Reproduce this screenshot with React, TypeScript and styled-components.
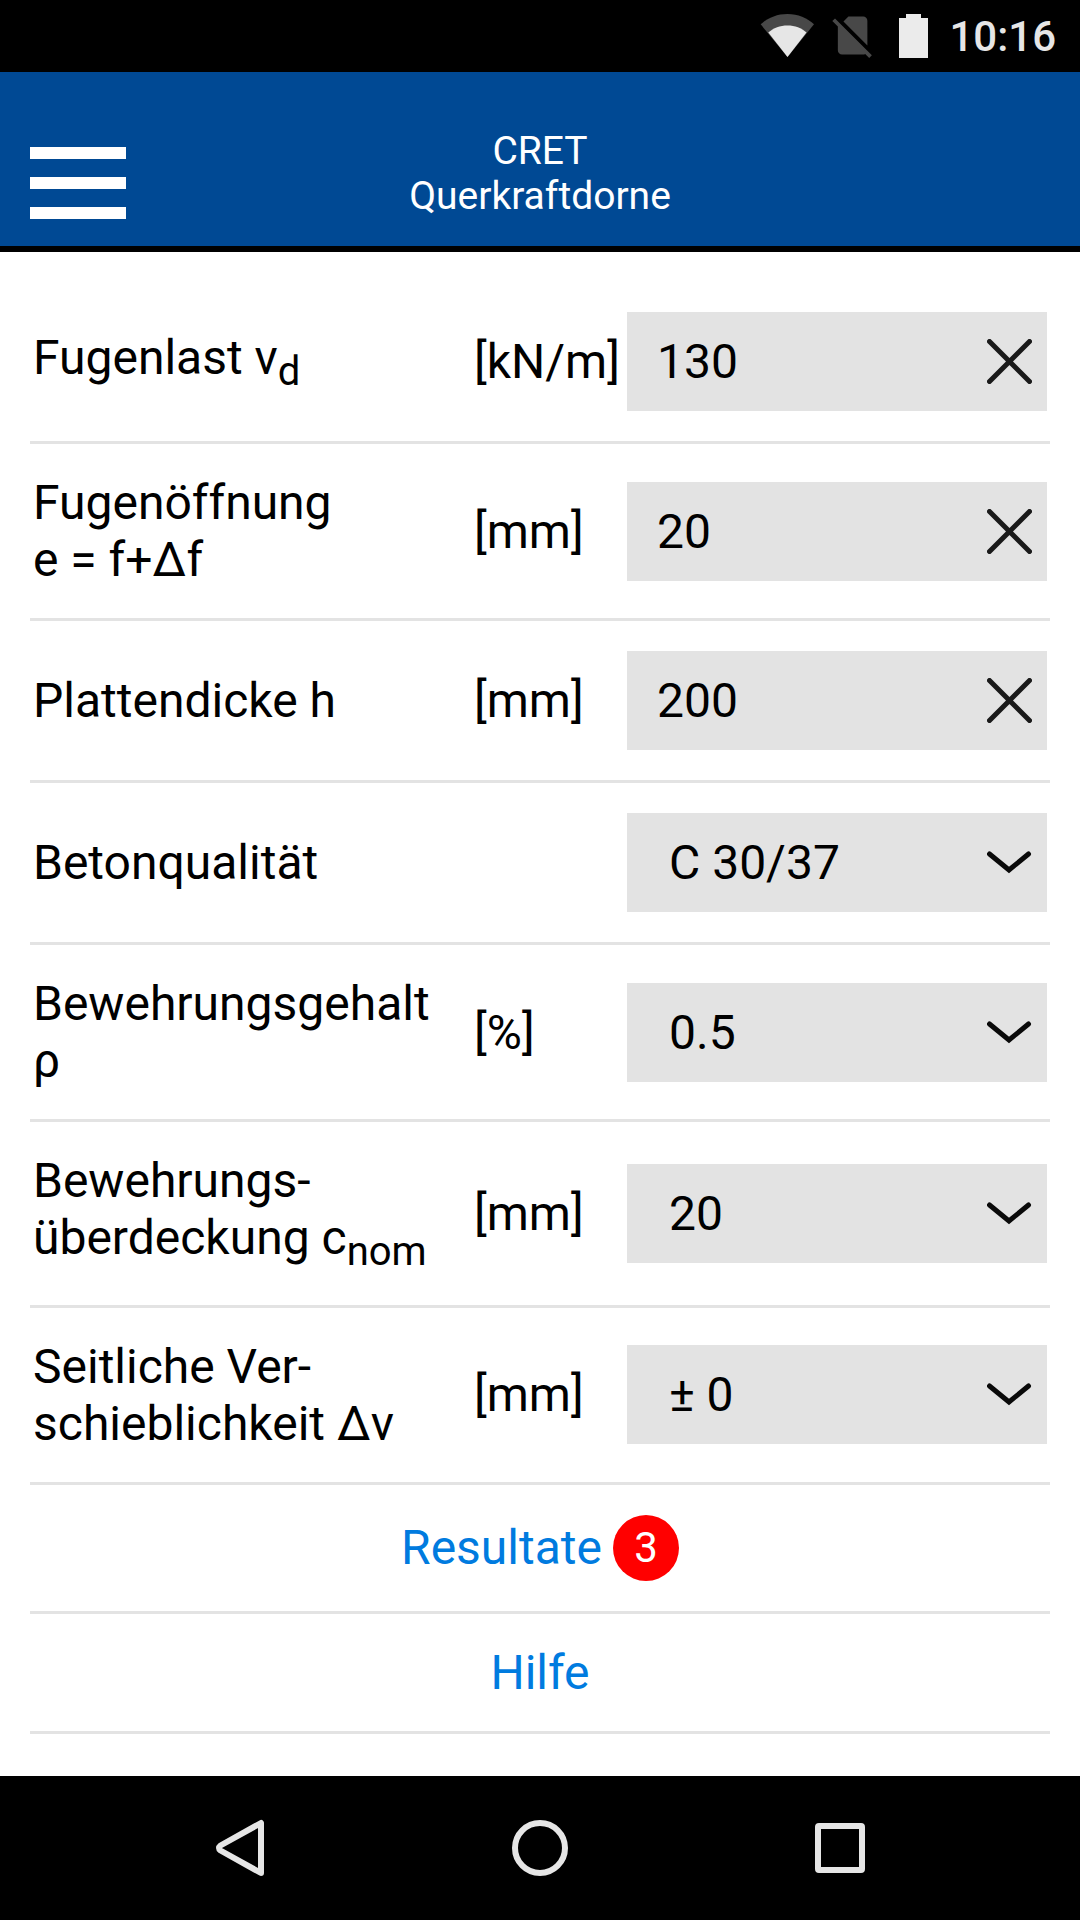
import React, { useState } from "react";
import styled, { createGlobalStyle } from "styled-components";

const color = {
  brand: "#004994",
  field: "#e3e3e3",
  link: "#007bdf",
  badge: "#ff0000",
  system: "#e6e6e6",
  systemDim: "#484848",
};

const GlobalStyle = createGlobalStyle`
  *, *::before, *::after { box-sizing: border-box; }
  body {
    margin: 0;
    background: #fff;
    color: #000;
    font-family: Roboto, "Noto Sans", sans-serif;
    font-size: 48px;
  }
  button, input, select { font: inherit; color: inherit; }
`;

const Screen = styled.div`
  display: flex;
  flex-direction: column;
  min-height: 100vh;
`;

const StatusBar = styled.div`
  display: flex;
  align-items: center;
  justify-content: flex-end;
  gap: 9px;
  height: 72px;
  padding-right: 24px;
  background: #000;
  color: ${color.system};
`;

const Clock = styled.time`
  font-size: 42px;
  font-weight: 500;
`;

const Header = styled.header`
  display: grid;
  grid-template-columns: 96px 1fr 96px;
  align-items: end;
  height: 180px;
  padding: 0 30px 27px;
  background: ${color.brand};
  border-bottom: 6px solid #000;
  color: #fff;
`;

const MenuButton = styled.button`
  display: flex;
  flex-direction: column;
  justify-content: space-between;
  height: 72px;
  padding: 0;
  border: 0;
  background: none;
`;

const MenuBar = styled.span`
  width: 100%;
  height: 12px;
  background: #fff;
`;

const Title = styled.h1`
  margin: 0;
  font-size: 39px;
  font-weight: 400;
  line-height: 45px;
  text-align: center;
`;

const Form = styled.main`
  flex: 1;
  padding: 30px 30px 0;
`;

const Row = styled.div`
  display: grid;
  grid-template-columns: 1fr 153px 420px;
  align-items: center;
  padding: 30px 3px;
  border-bottom: 3px solid ${color.field};
`;

const LinkRow = styled.div`
  display: flex;
  justify-content: center;
  padding: 30px 3px;
  border-bottom: 3px solid ${color.field};
`;

const Link = styled.a`
  display: flex;
  align-items: center;
  gap: 11px;
  color: ${color.link};
  text-decoration: none;
`;

const Badge = styled.span`
  width: 66px;
  border-radius: 50%;
  background: ${color.badge};
  color: #fff;
  font-size: 42px;
  line-height: 66px;
  text-align: center;
`;

const Field = styled.div`
  position: relative;
  display: flex;
  align-items: center;
  height: 99px;
  background: ${color.field};
`;

const TextInput = styled.input`
  flex: 1;
  min-width: 0;
  height: 100%;
  padding: 0 0 0 30px;
  border: 0;
  background: none;
  outline: none;
`;

const ClearButton = styled.button`
  display: flex;
  margin-right: 15px;
  padding: 0;
  border: 0;
  background: none;
`;

const Select = styled.select`
  width: 100%;
  height: 100%;
  padding: 0 75px 0 42px;
  border: 0;
  border-radius: 0;
  background: none;
  appearance: none;
  outline: none;
`;

const Chevron = styled.svg`
  position: absolute;
  right: 15px;
  pointer-events: none;
`;

const NavBar = styled.nav`
  display: flex;
  height: 144px;
  padding: 0 90px;
  background: #000;
`;

const NavButton = styled.button`
  display: flex;
  flex: 1;
  align-items: center;
  justify-content: center;
  padding: 0;
  border: 0;
  background: none;
  color: ${color.system};
`;

type RowProps = {
  id: string;
  label: React.ReactNode;
  unit?: string;
  children: React.ReactNode;
};

function FormRow({ id, label, unit, children }: RowProps) {
  return (
    <Row>
      <label htmlFor={id}>{label}</label>
      <span>{unit}</span>
      <Field>{children}</Field>
    </Row>
  );
}

function NumberRow({ id, label, unit, initial }: Omit<RowProps, "children"> & { initial: string }) {
  const [value, setValue] = useState(initial);
  return (
    <FormRow id={id} label={label} unit={unit}>
      <TextInput
        id={id}
        type="text"
        inputMode="decimal"
        value={value}
        onChange={(e) => setValue(e.target.value)}
      />
      <ClearButton type="button" aria-label="Löschen" onClick={() => setValue("")}>
        <svg width="45" height="45" viewBox="0 0 45 45" fill="none" stroke="#1a1a1a" strokeWidth="5" strokeLinecap="round">
          <path d="M2.5 2.5 42.5 42.5M42.5 2.5 2.5 42.5" />
        </svg>
      </ClearButton>
    </FormRow>
  );
}

function SelectRow({ id, label, unit, options }: Omit<RowProps, "children"> & { options: string[] }) {
  return (
    <FormRow id={id} label={label} unit={unit}>
      <Select id={id} defaultValue={options[0]}>
        {options.map((o) => (
          <option key={o}>{o}</option>
        ))}
      </Select>
      <Chevron width="45" height="45" viewBox="0 0 45 45" fill="none" stroke="#0a0a0a" strokeWidth="5" strokeLinecap="round">
        <path d="M2.5 14 22 30 41.5 14" />
      </Chevron>
    </FormRow>
  );
}

export default function App() {
  return (
    <Screen>
      <GlobalStyle />
      <StatusBar>
        <svg width="54" height="72" viewBox="0 0 54 72">
          <path d="M0.7 24.3C8 17.8 17 14 27.5 14S47 17.8 54 24.3L27.5 57Z" fill={color.systemDim} />
          <path d="M8.3 32.5C13.5 28 20 25.5 27.5 25.5S41.5 28 46.5 32.5L27.5 57Z" fill={color.system} />
        </svg>
        <svg width="54" height="72" viewBox="0 0 54 72">
          <path
            transform="translate(4.3 10.2) scale(2.11)"
            fill={color.systemDim}
            d="M18.99 5c0-1.1-.89-2-1.99-2h-7L7.66 5.34 19 16.68 18.99 5zM3.65 3.88L2.38 5.15 5 7.77V19c0 1.1.9 2 2 2h10.01c.35 0 .67-.1.96-.26l1.88 1.88 1.27-1.27L3.65 3.88z"
          />
        </svg>
        <svg width="54" height="72" viewBox="0 0 54 72">
          <path d="M20 14H35V18H42V58H13V18H20Z" fill="#ebebeb" />
        </svg>
        <Clock>10:16</Clock>
      </StatusBar>

      <Header>
        <MenuButton type="button" aria-label="Menü">
          <MenuBar />
          <MenuBar />
          <MenuBar />
        </MenuButton>
        <Title>
          CRET
          <br />
          Querkraftdorne
        </Title>
      </Header>

      <Form>
        <NumberRow id="load" label={<>Fugenlast v<sub>d</sub></>} unit="[kN/m]" initial="130" />
        <NumberRow id="joint" label={<>Fugenöffnung<br />e = f+Δf</>} unit="[mm]" initial="20" />
        <NumberRow id="slab" label="Plattendicke h" unit="[mm]" initial="200" />
        <SelectRow id="concrete" label="Betonqualität" options={["C 30/37"]} />
        <SelectRow id="ratio" label={<>Bewehrungsgehalt<br />ρ</>} unit="[%]" options={["0.5"]} />
        <SelectRow id="cover" label={<>Bewehrungs-<br />überdeckung c<sub>nom</sub></>} unit="[mm]" options={["20"]} />
        <SelectRow id="shift" label={<>Seitliche Ver-<br />schieblichkeit Δv</>} unit="[mm]" options={["± 0"]} />
        <LinkRow>
          <Link href="#resultate">
            Resultate <Badge>3</Badge>
          </Link>
        </LinkRow>
        <LinkRow>
          <Link href="#hilfe">Hilfe</Link>
        </LinkRow>
      </Form>

      <NavBar>
        <NavButton type="button" aria-label="Zurück">
          <svg width="60" height="60" viewBox="0 0 60 60" fill="none" stroke="currentColor" strokeWidth="6" strokeLinejoin="round">
            <path d="M51 5V55L10.500 32.500Q7.500 30 10.500 27.500Z" />
          </svg>
        </NavButton>
        <NavButton type="button" aria-label="Startseite">
          <svg width="60" height="60" viewBox="0 0 60 60" fill="none" stroke="currentColor" strokeWidth="6">
            <circle cx="30" cy="30" r="25" />
          </svg>
        </NavButton>
        <NavButton type="button" aria-label="Übersicht">
          <svg width="60" height="60" viewBox="0 0 60 60" fill="none" stroke="currentColor" strokeWidth="6" strokeLinejoin="round">
            <rect x="8" y="8" width="44" height="44" rx="1" />
          </svg>
        </NavButton>
      </NavBar>
    </Screen>
  );
}
